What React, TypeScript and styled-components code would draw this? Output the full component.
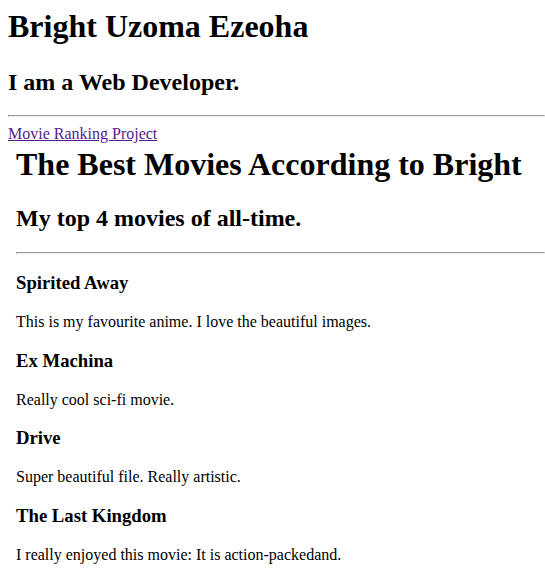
import styled, { createGlobalStyle } from "styled-components";

const GlobalStyle = createGlobalStyle`
  html {
    overflow: hidden;
  }
  body {
    margin: 8px 0 0 8px;
    font-family: "Liberation Serif", "Times New Roman", serif;
    color: #000;
    background: #fff;
  }
`

const Title = styled.h1<{ $gap?: number }>`
  font-size: 2em;
  margin: 0 0 ${(p) => p.$gap ?? 21.44}px;
`

const Subtitle = styled.h2`
  font-size: 1.5em;
  margin: 0.83em 0;
`

const Rule = styled.hr`
  margin: 8px 0;
  border-style: inset;
  border-width: 1px;
  color: gray;
`

const ProjectLink = styled.a`
  color: #551a8b;
  text-decoration: underline;
`

const Project = styled.section`
  padding: 3px 0 0 8px;
`

const MovieTitle = styled.h3`
  font-size: 1.17em;
  margin: 1em 0;
`

const MovieNote = styled.p`
  margin: 1em 0;
`

const movies = [
    { title: "Spirited Away", note: "This is my favourite anime. I love the beautiful images." },
    { title: "Ex Machina", note: "Really cool sci-fi movie." },
    { title: "Drive", note: "Super beautiful file. Really artistic." },
    { title: "The Last Kingdom", note: "I really enjoyed this movie: It is action-packedand." },
]

export default function App() {
    return (
        <>
            <GlobalStyle/>
            <Title $gap={23.5}>Bright Uzoma Ezeoha</Title>
            <Subtitle>I am a Web Developer.</Subtitle>
            <Rule/>
            <ProjectLink href="#">Movie Ranking Project</ProjectLink>
            <Project>
                <Title>The Best Movies According to Bright</Title>
                <Subtitle>My top 4 movies of all-time.</Subtitle>
                <Rule/>
                {movies.map((m) => (
                    <div key={m.title}>
                        <MovieTitle>{m.title}</MovieTitle>
                        <MovieNote>{m.note}</MovieNote>
                    </div>
                ))}
            </Project>
        </>
    )
}
